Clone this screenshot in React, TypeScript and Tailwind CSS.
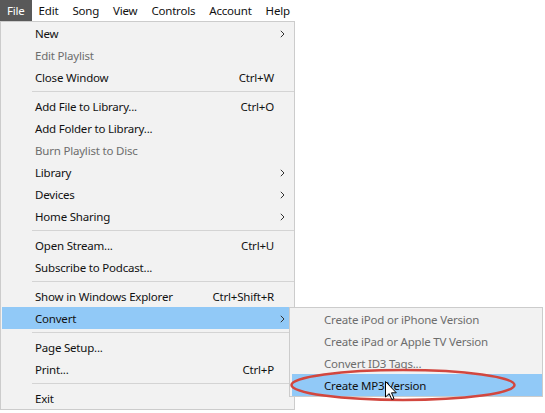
import React from "react";

type Item =
  | { sep: true }
  | { sep?: false; label: string; shortcut?: string; arrow?: boolean; disabled?: boolean; active?: boolean };

const items: Item[] = [
  { label: "New", arrow: true },
  { label: "Edit Playlist", disabled: true },
  { label: "Close Window", shortcut: "Ctrl+W" },
  { sep: true },
  { label: "Add File to Library...", shortcut: "Ctrl+O" },
  { label: "Add Folder to Library..." },
  { label: "Burn Playlist to Disc", disabled: true },
  { label: "Library", arrow: true },
  { label: "Devices", arrow: true },
  { label: "Home Sharing", arrow: true },
  { sep: true },
  { label: "Open Stream...", shortcut: "Ctrl+U" },
  { label: "Subscribe to Podcast..." },
  { sep: true },
  { label: "Show in Windows Explorer", shortcut: "Ctrl+Shift+R" },
  { label: "Convert", arrow: true, active: true },
  { sep: true },
  { label: "Page Setup..." },
  { label: "Print...", shortcut: "Ctrl+P" },
  { sep: true },
  { label: "Exit" },
];

const Chevron = () => (
  <svg width="5" height="8" viewBox="0 0 5 8" className="block">
    <path d="M0.8 0.8 L4 4 L0.8 7.2" fill="none" stroke="#333" strokeWidth="1" />
  </svg>
);

const font = { fontFamily: "'Noto Sans', 'Open Sans', sans-serif" };

export default function App() {
  const bar = ["File", "Edit", "Song", "View", "Controls", "Account", "Help"];
  return (
    <div
      className="relative w-[545px] h-[413px] bg-white overflow-hidden text-[11.5px] tracking-[-0.2px] text-[#111]"
      style={font}
    >
      <div className="flex h-[21px] items-stretch">
        {bar.map((b, i) => (
          <div
            key={b}
            className={
              i === 0
                ? "px-[7px] pt-px flex items-center bg-[#595959] text-white"
                : "px-[7px] pt-px flex items-center text-[#111]"
            }
          >
            {b}
          </div>
        ))}
      </div>
      <div className="w-[295px] border border-[#cccccc] bg-[#f2f2f2] flex flex-col">
        {items.map((it, i) =>
          it.sep ? (
            <div key={i} className="h-[7px] flex items-center">
              <div className="ml-[31px] flex-1 h-px bg-[#d4d4d4]" />
            </div>
          ) : (
            <div
              key={i}
              className={
                "h-[22px] mx-[1px] flex items-center pt-px pl-[33px] " +
                (it.active ? "bg-[#91c9f7] " : "") +
                (it.disabled ? "text-[#6d6d6d]" : "text-[#111]")
              }
            >
              <span className="flex-1 whitespace-nowrap">{it.label}</span>
              {it.shortcut && <span className="whitespace-nowrap">{it.shortcut}</span>}
              <span className="w-[19px] flex items-center pl-[6px]">{it.arrow && <Chevron />}</span>
            </div>
          )
        )}
      </div>

      <div className="absolute left-[289px] top-[307px] w-[254px] border border-[#cccccc] bg-[#f2f2f2] flex flex-col">
        {[
          "Create iPod or iPhone Version",
          "Create iPad or Apple TV Version",
          "Convert ID3 Tags...",
        ].map((t) => (
          <div key={t} className="h-[22px] ml-[2px] pt-px pl-[32px] flex items-center text-[#6d6d6d] whitespace-nowrap">
            {t}
          </div>
        ))}
        <div className="h-[22px] ml-[2px] pt-px pl-[32px] flex items-center bg-[#91c9f7] text-[#111] whitespace-nowrap">
          Create MP3 Version
        </div>
      </div>

      <svg className="absolute left-[289px] top-[367px]" width="230" height="36" viewBox="0 0 230 36">
        <ellipse cx="114" cy="18" rx="111.5" ry="15" fill="none" stroke="#d2473f" strokeWidth="2.5" />
      </svg>

      <svg className="absolute left-[385px] top-[381px]" width="13" height="20" viewBox="0 0 13 20">
        <path
          d="M0.5 0.5 L0.5 16 L4.2 12.6 L6.8 18.5 L9 17.6 L6.5 11.8 L11.3 11.8 Z"
          fill="#fff"
          stroke="#000"
          strokeWidth="1"
          strokeLinejoin="miter"
        />
      </svg>
    </div>
  );
}
